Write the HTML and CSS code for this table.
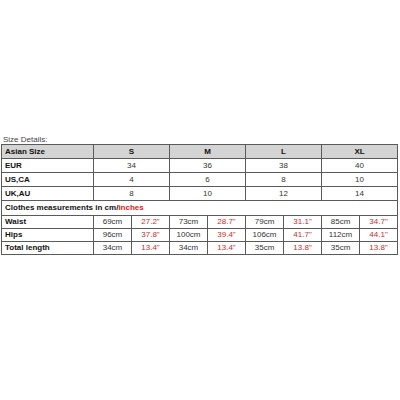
FILE: index.html
```html
<!DOCTYPE html>
<html>
<head>
<meta charset="utf-8">
<link rel="stylesheet" href="styles.css">
</head>
<body>
<div class="page">
  <div class="caption">Size Details:</div>
  <table class="sizes">
    <colgroup>
      <col class="c-label">
      <col class="c-val"><col class="c-val"><col class="c-val"><col class="c-val">
      <col class="c-val"><col class="c-val"><col class="c-val"><col class="c-val">
    </colgroup>
    <tr class="head">
      <td class="label">Asian Size</td>
      <td colspan="2" class="hcell">S</td>
      <td colspan="2" class="hcell">M</td>
      <td colspan="2" class="hcell">L</td>
      <td colspan="2" class="hcell">XL</td>
    </tr>
    <tr class="top">
      <td class="label">EUR</td>
      <td colspan="2">34</td><td colspan="2">36</td><td colspan="2">38</td><td colspan="2">40</td>
    </tr>
    <tr class="top">
      <td class="label">US,CA</td>
      <td colspan="2">4</td><td colspan="2">6</td><td colspan="2">8</td><td colspan="2">10</td>
    </tr>
    <tr class="top">
      <td class="label">UK,AU</td>
      <td colspan="2">8</td><td colspan="2">10</td><td colspan="2">12</td><td colspan="2">14</td>
    </tr>
    <tr class="section">
      <td colspan="9" class="label">Clothes measurements in cm/<span class="red">inches</span></td>
    </tr>
    <tr class="meas">
      <td class="label">Waist</td>
      <td>69cm</td><td class="red">27.2"</td>
      <td>73cm</td><td class="red">28.7"</td>
      <td>79cm</td><td class="red">31.1"</td>
      <td>85cm</td><td class="red">34.7"</td>
    </tr>
    <tr class="meas">
      <td class="label">Hips</td>
      <td>96cm</td><td class="red">37.8"</td>
      <td>100cm</td><td class="red">39.4"</td>
      <td>106cm</td><td class="red">41.7"</td>
      <td>112cm</td><td class="red">44.1"</td>
    </tr>
    <tr class="meas">
      <td class="label">Total length</td>
      <td>34cm</td><td class="red">13.4"</td>
      <td>34cm</td><td class="red">13.4"</td>
      <td>35cm</td><td class="red">13.8"</td>
      <td>35cm</td><td class="red">13.8"</td>
    </tr>
  </table>
</div>
</body>
</html>
```
FILE: styles.css
```css
html, body {
  margin: 0;
  padding: 0;
  background: #ffffff;
}
.page {
  padding: 135px 0 0 1px;
  font-family: "Liberation Sans", Arial, sans-serif;
}
.caption {
  font-size: 8px;
  line-height: 9px;
  color: #444;
  padding-left: 2px;
}
.sizes {
  border-collapse: collapse;
  table-layout: fixed;
  width: 397px;
  font-size: 8px;
  color: #333;
}
.c-label { width: 92px; }
.c-val { width: 38px; }
.sizes td {
  border: 1px solid #5a5a5a;
  padding: 0;
  text-align: center;
  vertical-align: middle;
  line-height: 10px;
  white-space: nowrap;
  overflow: hidden;
}
.sizes td.label {
  text-align: left;
  font-weight: bold;
  color: #111;
  padding-left: 3px;
}
.head td { background: #d4d4d4; height: 13px; }
.hcell { font-weight: bold; color: #111; }
.top td { height: 13px; }
.section td { height: 14px; }
.meas td { height: 12px; }
.red { color: #d42a2a; }
.sizes td.label .red { color: #e02020; }
```
